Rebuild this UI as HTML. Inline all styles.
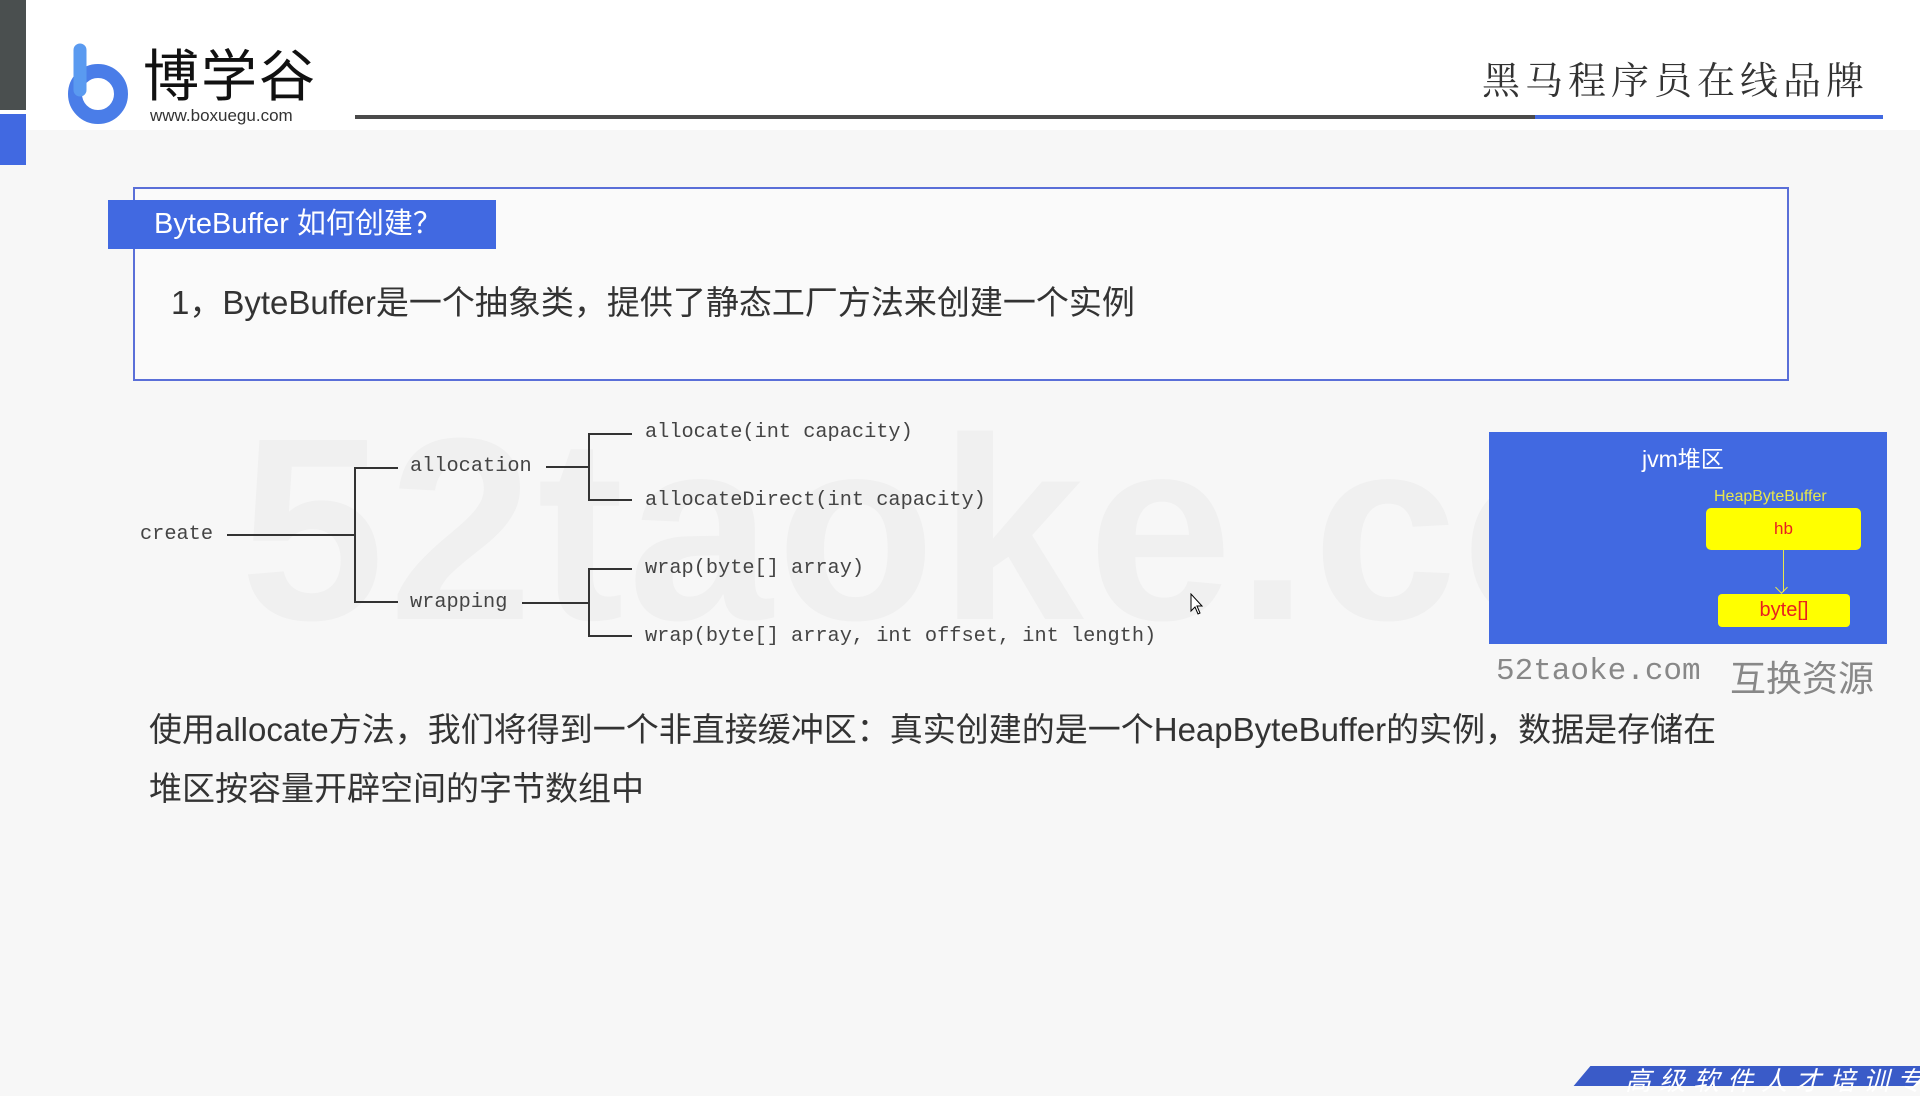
<!DOCTYPE html>
<html><head><meta charset="utf-8"><style>
body{margin:0;width:1920px;height:1080px;overflow:hidden;background:#f7f7f7;position:relative;font-family:"Liberation Sans","Noto Sans CJK SC",sans-serif;}
.a{position:absolute;white-space:nowrap;}
.m{font-family:"Liberation Mono","DejaVu Sans Mono",monospace;font-size:20.3px;color:#444;line-height:24px;}
.l{position:absolute;background:#333;}
</style></head><body>
<div class="a" style="left:0;top:0;width:1920px;height:130px;background:#fff"></div>
<div class="a" style="left:0;top:0;width:26px;height:110px;background:#4a4f4f"></div>
<div class="a" style="left:0;top:114px;width:26px;height:51px;background:#4169e1"></div>
<svg class="a" style="left:60px;top:40px" width="80" height="86" viewBox="0 0 80 86">
<circle cx="38" cy="54" r="23" fill="none" stroke="#4a7de8" stroke-width="14"/>
<line x1="20" y1="10" x2="20" y2="50" stroke="#5a9af0" stroke-width="13" stroke-linecap="round"/>
</svg>
<div class="a" style="left:143px;top:44px;font-size:56px;color:#111;letter-spacing:2px;line-height:66px">博学谷</div>
<div class="a" style="left:150px;top:106px;font-size:17px;color:#333">www.boxuegu.com</div>
<div class="a" style="left:355px;top:115px;width:1180px;height:4px;background:#4a4a4a"></div>
<div class="a" style="left:1535px;top:115px;width:348px;height:4px;background:#4169e1"></div>
<div class="a" style="left:1482px;top:50px;font-size:38px;color:#333;letter-spacing:5px;font-family:'Liberation Serif','Noto Serif CJK SC',serif">黑马程序员在线品牌</div>
<div class="a" style="left:240px;top:400px;font-size:260px;font-weight:bold;color:#f0f0f0;line-height:260px;letter-spacing:4px">52taoke.com</div>
<div class="a" style="left:133px;top:187px;width:1652px;height:190px;border:2px solid #5a6fd8;background:#fafafa"></div>
<div class="a" style="left:108px;top:200px;width:388px;height:49px;background:#4169e1"></div>
<div class="a" style="left:154px;top:204px;font-size:29px;color:#fff;line-height:40px">ByteBuffer 如何创建？</div>
<div class="a" style="left:171px;top:282px;font-size:33px;color:#333;line-height:42px">1，ByteBuffer是一个抽象类，提供了静态工厂方法来创建一个实例</div>
<div class="a m" style="left:140px;top:523px">create</div>
<div class="a m" style="left:410px;top:455px">allocation</div>
<div class="a m" style="left:410px;top:591px">wrapping</div>
<div class="a m" style="left:645px;top:421px">allocate(int capacity)</div>
<div class="a m" style="left:645px;top:489px">allocateDirect(int capacity)</div>
<div class="a m" style="left:645px;top:557px">wrap(byte[] array)</div>
<div class="a m" style="left:645px;top:625px">wrap(byte[] array, int offset, int length)</div>
<div class="l" style="left:227px;top:534px;width:128px;height:2px"></div>
<div class="l" style="left:354px;top:467px;width:2px;height:136px"></div>
<div class="l" style="left:354px;top:467px;width:44px;height:2px"></div>
<div class="l" style="left:354px;top:601px;width:44px;height:2px"></div>
<div class="l" style="left:546px;top:466px;width:43px;height:2px"></div>
<div class="l" style="left:588px;top:433px;width:2px;height:68px"></div>
<div class="l" style="left:588px;top:433px;width:44px;height:2px"></div>
<div class="l" style="left:588px;top:499px;width:44px;height:2px"></div>
<div class="l" style="left:522px;top:602px;width:67px;height:2px"></div>
<div class="l" style="left:588px;top:568px;width:2px;height:69px"></div>
<div class="l" style="left:588px;top:568px;width:44px;height:2px"></div>
<div class="l" style="left:588px;top:635px;width:44px;height:2px"></div>
<div class="a" style="left:1489px;top:432px;width:398px;height:212px;background:#4169e1"></div>
<div class="a" style="left:1642px;top:440px;font-size:23px;color:#fff">jvm堆区</div>
<div class="a" style="left:1714px;top:488px;font-size:16px;color:#e8e84a">HeapByteBuffer</div>
<div class="a" style="left:1706px;top:508px;width:155px;height:42px;background:#ffff00;border-radius:5px;color:#e8211f;font-size:17px;text-align:center;line-height:42px">hb</div>
<div class="a" style="left:1783px;top:550px;width:1px;height:42px;background:#e8e84a"></div>
<div class="a" style="left:1777px;top:583px;width:8px;height:8px;border-right:1px solid #e8e84a;border-bottom:1px solid #e8e84a;transform:rotate(45deg)"></div>
<div class="a" style="left:1718px;top:594px;width:132px;height:33px;background:#ffff00;border-radius:4px;color:#e8211f;font-size:20px;text-align:center;line-height:33px">byte[]</div>
<div class="a" style="left:1496px;top:654px;font-size:31px;color:#888;font-family:'Liberation Mono',monospace">52taoke.com</div>
<div class="a" style="left:1730px;top:650px;font-size:36px;color:#888">互换资源</div>
<div class="a" style="left:149px;top:700px;font-size:33px;color:#333;line-height:59px">使用allocate方法，我们将得到一个非直接缓冲区：真实创建的是一个HeapByteBuffer的实例，数据是存储在<br>堆区按容量开辟空间的字节数组中</div>
<svg class="a" style="left:1190px;top:593px" width="16" height="24" viewBox="0 0 16 24"><path d="M1 1 L1 18 L5 14 L8 21 L10 20 L7 13 L12 13 Z" fill="#fff" stroke="#000" stroke-width="1"/></svg>
<div class="a" style="left:1582px;top:1066px;width:340px;height:20px;background:#3a5bc8;transform:skewX(-40deg)"></div>
<div class="a" style="left:1625px;top:1066px;font-size:26px;color:#fff;font-style:italic;letter-spacing:8px;line-height:30px">高级软件人才培训专</div>
</body></html>
